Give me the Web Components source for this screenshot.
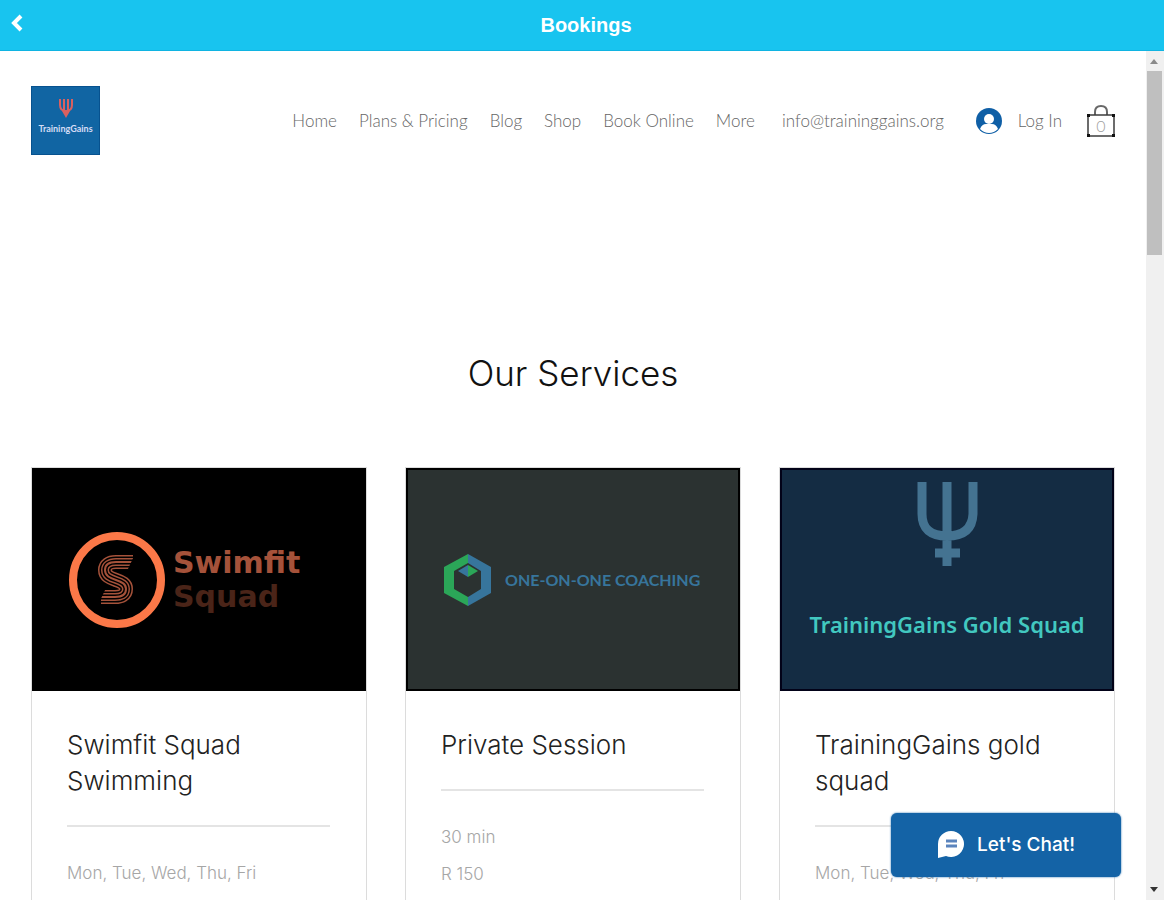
<!DOCTYPE html>
<html lang="en">
<head>
<meta charset="utf-8">
<meta name="viewport" content="width=device-width, initial-scale=1">
<title>Bookings</title>
<style>
    html, body {
        height: 100%;
        margin: 0;
    }

    body {
        background: #fff;
        font-family: Inter, "Liberation Sans", sans-serif;
        overflow: hidden;
    }
</style>
</head>
<body>
<booking-app>
    <app-bar slot="bar">Bookings</app-bar>

    <site-header>
        <nav-link href="#home">Home</nav-link>
        <nav-link href="#plans">Plans &amp; Pricing</nav-link>
        <nav-link href="#blog">Blog</nav-link>
        <nav-link href="#shop">Shop</nav-link>
        <nav-link href="#book">Book Online</nav-link>
        <nav-link href="#more">More</nav-link>
        <nav-link slot="contact" href="mailto:info@traininggains.org">info@traininggains.org</nav-link>
        <member-login slot="tools">Log In</member-login>
        <cart-button slot="tools">0</cart-button>
    </site-header>

    <service-list heading="Our Services">
        <service-card>
            <swimfit-art slot="art"></swimfit-art>
            Swimfit Squad Swimming
            <span slot="detail">Mon, Tue, Wed, Thu, Fri</span>
        </service-card>
        <service-card>
            <coaching-art slot="art"></coaching-art>
            Private Session
            <span slot="detail">30 min</span>
            <span slot="detail">R 150</span>
        </service-card>
        <service-card>
            <gold-art slot="art"></gold-art>
            TrainingGains gold squad
            <span slot="detail">Mon, Tue, Wed, Thu, Fri</span>
        </service-card>
    </service-list>

    <scroll-rail slot="rail"></scroll-rail>
    <chat-button slot="chat">Let's Chat!</chat-button>
</booking-app>

<script>
// Attaches an open shadow root and fills it with a copy of the template
var attachTemplate = (host, markup) => {
    const template = document.createElement("template")
    template.innerHTML = markup
    host.attachShadow({ mode: "open" }).appendChild(template.content.cloneNode(true))
}

class BookingApp extends HTMLElement {
    constructor() {
        super()
        attachTemplate(this, `
<style>
    :host {
        display: flex;
        flex-direction: column;
        height: 100vh;
    }

    #view {
        flex: 1;
        min-height: 0;
        display: flex;
        position: relative;
    }

    main {
        flex: 1;
        min-width: 0;
        overflow: hidden;
    }

    #chat {
        position: absolute;
        right: 43px;
        bottom: 23px;
    }
</style>
<slot name="bar"></slot>
<div id="view">
    <main><slot></slot></main>
    <slot name="rail"></slot>
    <div id="chat"><slot name="chat"></slot></div>
</div>`)
    }
}

class AppBar extends HTMLElement {
    constructor() {
        super()
        attachTemplate(this, `
<style>
    :host {
        display: flex;
        align-items: center;
        flex: none;
        height: 50px;
        padding-right: 16px;
        background: #18c4ef;
        border-bottom: 1px solid #10b4e2;
    }

    button {
        width: 24px;
        padding: 0 0 4px 10px;
        border: 0;
        background: none;
        cursor: pointer;
    }

    svg {
        display: block;
    }

    h1 {
        flex: 1;
        margin: 0;
        color: #fff;
        font: bold 20px/24px "Liberation Sans", sans-serif;
        text-align: center;
    }
</style>
<button type="button" aria-label="Back">
    <svg width="14" height="18" viewBox="0 0 14 18" fill="none" stroke="#fff" stroke-width="4">
        <path d="M11 2 4 9l7 7"/>
    </svg>
</button>
<h1><slot></slot></h1>`)
    }
}

/**
 * Site header
 */
class SiteHeader extends HTMLElement {
    constructor() {
        super()
        attachTemplate(this, `
<style>
    :host {
        display: flex;
        align-items: center;
        justify-content: space-between;
        padding: 35px 31px 0;
    }

    nav, #tools {
        display: flex;
        align-items: center;
    }

    nav {
        gap: 22px;
    }

    #tools {
        gap: 25px;
    }

    #right {
        display: flex;
        align-items: center;
    }

    #contact {
        margin: 0 32px 0 27px;
    }
</style>
<brand-logo></brand-logo>
<div id="right">
    <nav><slot></slot></nav>
    <div id="contact"><slot name="contact"></slot></div>
    <div id="tools"><slot name="tools"></slot></div>
</div>`)
    }
}

class BrandLogo extends HTMLElement {
    constructor() {
        super()
        attachTemplate(this, `
<style>
    :host {
        display: block;
    }

    a {
        display: flex;
        flex-direction: column;
        align-items: center;
        box-sizing: border-box;
        width: 69px;
        height: 69px;
        padding-top: 12px;
        gap: 4px;
        background: #1165a3;
        border: 1px solid #07528f;
        color: #d5dcf5;
        font: bold 9px/12px Lato, sans-serif;
        text-decoration: none;
    }
</style>
<a href="#home">
    <svg width="14" height="20" viewBox="0 0 14 20" fill="none" stroke="#d9605f" stroke-width="2">
        <path d="M1 0v6q0 6 6 6t6-6V0M5 0v14M9 0v14"/>
        <path d="M3 12h8l-4 7Z" fill="#d9605f" stroke="none"/>
    </svg>
    <span>TrainingGains</span>
</a>`)
    }
}

class NavLink extends HTMLElement {
    constructor() {
        super()
        attachTemplate(this, `
<style>
    :host {
        display: block;
    }

    a {
        color: #666;
        font: 300 17px/24px Lato, sans-serif;
        text-decoration: none;
        white-space: nowrap;
    }
</style>
<a><slot></slot></a>`)
    }

    connectedCallback() {
        this.shadowRoot.querySelector("a").href = this.getAttribute("href")
    }
}

class MemberLogin extends HTMLElement {
    constructor() {
        super()
        attachTemplate(this, `
<style>
    :host {
        display: block;
    }

    button {
        display: flex;
        align-items: center;
        gap: 16px;
        padding: 0;
        border: 0;
        background: none;
        color: #666;
        font: 300 17px/24px Lato, sans-serif;
        cursor: pointer;
    }
</style>
<button type="button">
    <svg width="26" height="26" viewBox="0 0 26 26">
        <circle cx="13" cy="13" r="13" fill="#0f5fa6"/>
        <circle cx="13" cy="11" r="5" fill="#fff"/>
        <path d="M4 21q2-5 6-5h6q4 0 6 5-4 4-9 4t-9-4Z" fill="#fff"/>
    </svg>
    <slot></slot>
</button>`)
    }
}

class CartButton extends HTMLElement {
    constructor() {
        super()
        attachTemplate(this, `
<style>
    :host {
        display: block;
    }

    button {
        display: grid;
        padding: 0;
        border: 0;
        background: none;
        color: #a0a0a0;
        font: 300 16px/22px Lato, sans-serif;
        cursor: pointer;
    }

    /* The count shares the icon's cell, low down in the bag */
    svg, span {
        grid-area: 1 / 1;
    }

    span {
        align-self: end;
    }
</style>
<button type="button" aria-label="Cart">
    <svg width="28" height="32" viewBox="0 0 28 32" fill="none">
        <path d="M8 10V7q0-6 6-6t6 6v3" stroke="#686868" stroke-width="2"/>
        <path d="M1 10h26v21H1Z" stroke="#3d3d3d" stroke-width="1.5"/>
        <path d="M0 9h3v3H0ZM25 9h3v3h-3ZM0 29h3v3H0ZM25 29h3v3h-3Z" fill="#111"/>
    </svg>
    <span><slot></slot></span>
</button>`)
    }
}

/**
 * Services
 */
class ServiceList extends HTMLElement {
    constructor() {
        super()
        attachTemplate(this, `
<style>
    :host {
        display: block;
        padding: 194px 31px 0;
    }

    h2 {
        margin: 0 0 70px;
        color: #111;
        font-size: 35px;
        font-weight: 300;
        line-height: 48px;
        text-align: center;
    }

    #cards {
        display: grid;
        grid-template-columns: repeat(3, minmax(0, 1fr));
        gap: 38px;
    }
</style>
<h2></h2>
<div id="cards"><slot></slot></div>`)
    }

    connectedCallback() {
        this.shadowRoot.querySelector("h2").textContent = this.getAttribute("heading")
    }
}

class ServiceCard extends HTMLElement {
    constructor() {
        super()
        attachTemplate(this, `
<style>
    :host {
        display: block;
        border: 1px solid #dcdcdc;
    }

    #body {
        padding: 36px 36px 60px 35px;
    }

    h3 {
        margin: 0;
        color: #222;
        font-size: 26px;
        font-weight: 300;
        line-height: 36px;
    }

    hr {
        margin: 26px 0 28px;
        border: 0;
        border-top: 2px solid #e4e4e4;
    }

    ::slotted([slot="detail"]) {
        display: block;
        color: #a6a6a6;
        font-size: 17px;
        font-weight: 300;
        line-height: 37px;
    }
</style>
<slot name="art"></slot>
<div id="body">
    <h3><slot></slot></h3>
    <hr>
    <slot name="detail"></slot>
</div>`)
    }
}

class SwimfitArt extends HTMLElement {
    constructor() {
        super()
        attachTemplate(this, `
<style>
    :host {
        display: flex;
        align-items: center;
        gap: 8px;
        box-sizing: border-box;
        height: 223px;
        padding: 0 37px;
        background: #000;
        font: bold 30px/34px "DejaVu Sans", sans-serif;
    }

    svg {
        flex: none;
    }

    .first {
        color: #a5523a;
    }

    .second {
        color: #4a2418;
    }

    div {
        white-space: nowrap;
    }
</style>
<svg width="96" height="96" viewBox="0 0 96 96" fill="none">
    <defs>
        <path id="wave" d="M64 30H47c-7 0-11 3-11 8 0 6 5 8 11 10s10 4 10 9c0 6-5 8-11 8H32"/>
    </defs>
    <circle cx="48" cy="48" r="44" stroke="#fb7848" stroke-width="8"/>
    <use href="#wave" stroke="#a5523a" stroke-width="14"/>
    <use href="#wave" stroke="#000" stroke-width="11"/>
    <use href="#wave" stroke="#a5523a" stroke-width="8"/>
    <use href="#wave" stroke="#000" stroke-width="5"/>
    <use href="#wave" stroke="#a5523a" stroke-width="2"/>
    <path d="M58 39l8-17v17ZM37 56l-8 17V56Z" fill="#000"/>
</svg>
<div>
    <div class="first">Swimfit</div>
    <div class="second">Squad</div>
</div>`)
    }
}

class CoachingArt extends HTMLElement {
    constructor() {
        super()
        attachTemplate(this, `
<style>
    :host {
        display: flex;
        align-items: center;
        gap: 14px;
        box-sizing: border-box;
        height: 223px;
        padding: 0 36px;
        background: #2b3231;
        border: 2px solid #000;
        color: #37759c;
        font: bold 16px/20px Lato, sans-serif;
        white-space: nowrap;
    }

    svg {
        flex: none;
    }
</style>
<svg width="47" height="52" viewBox="0 0 47 52">
    <path d="M24 0 0 13v26l24 13v-9L10 35V17L24 9Z" fill="#2ba658"/>
    <path d="M24 0l23 13v26L24 52v-9l13-8V17L24 9Z" fill="#37759c"/>
    <path d="M24 11 14 17l10 6Z" fill="#37759c"/>
    <path d="M24 11l10 6-10 6Z" fill="#2ba658"/>
</svg>
<span>ONE-ON-ONE COACHING</span>`)
    }
}

class GoldArt extends HTMLElement {
    constructor() {
        super()
        attachTemplate(this, `
<style>
    :host {
        display: flex;
        flex-direction: column;
        align-items: center;
        gap: 42px;
        box-sizing: border-box;
        height: 223px;
        padding-top: 12px;
        background: #142c43;
        border: 2px solid #020218;
        color: #42c8c0;
        font: 600 22px/32px "Noto Sans", sans-serif;
        white-space: nowrap;
    }

    svg {
        flex: none;
    }
</style>
<svg width="61" height="84" viewBox="0 0 61 84" fill="none" stroke="#447391" stroke-width="9">
    <path d="M5 0v32q0 22 25 22t26-22V0M30 0v84M18 71h25"/>
</svg>
<span>TrainingGains Gold Squad</span>`)
    }
}

/**
 * Page furniture
 */
class ScrollRail extends HTMLElement {
    constructor() {
        super()
        attachTemplate(this, `
<style>
    :host {
        display: flex;
        flex-direction: column;
        flex: none;
        align-items: center;
        width: 18px;
        background: #f0f0f0;
    }

    svg {
        flex: none;
    }

    #track {
        flex: 1;
        align-self: stretch;
        padding: 0 2px 0 1px;
    }

    #thumb {
        height: 184px;
        background: #bfbfbf;
    }
</style>
<svg width="18" height="20" viewBox="0 0 18 20"><path d="M4 13l4-5 4 5Z" fill="#8a8a8a"/></svg>
<div id="track"><div id="thumb"></div></div>
<svg width="18" height="20" viewBox="0 0 18 20"><path d="M4 7h8l-4 5Z" fill="#333"/></svg>`)
    }
}

class ChatButton extends HTMLElement {
    constructor() {
        super()
        attachTemplate(this, `
<style>
    :host {
        display: block;
    }

    button {
        display: flex;
        align-items: center;
        justify-content: center;
        gap: 12px;
        width: 230px;
        height: 64px;
        padding: 0;
        border: 0;
        border-radius: 6px;
        background: #1463a6;
        box-shadow: 0 0 2px #1463a6;
        color: #fff;
        font: 500 19px/24px Inter, sans-serif;
        cursor: pointer;
    }
</style>
<button type="button">
    <svg width="28" height="28" viewBox="0 0 28 28">
        <path d="M14 0a13 13 0 1 1-5 25L1 27V13A13 13 0 0 1 14 0Z" fill="#fff"/>
        <path d="M9 10h11M9 15h11" stroke="#5b84bd" stroke-width="3"/>
    </svg>
    <slot></slot>
</button>`)
    }
}

window.customElements.define("booking-app", BookingApp)
window.customElements.define("app-bar", AppBar)
window.customElements.define("site-header", SiteHeader)
window.customElements.define("brand-logo", BrandLogo)
window.customElements.define("nav-link", NavLink)
window.customElements.define("member-login", MemberLogin)
window.customElements.define("cart-button", CartButton)
window.customElements.define("service-list", ServiceList)
window.customElements.define("service-card", ServiceCard)
window.customElements.define("swimfit-art", SwimfitArt)
window.customElements.define("coaching-art", CoachingArt)
window.customElements.define("gold-art", GoldArt)
window.customElements.define("scroll-rail", ScrollRail)
window.customElements.define("chat-button", ChatButton)
</script>
</body>
</html>
